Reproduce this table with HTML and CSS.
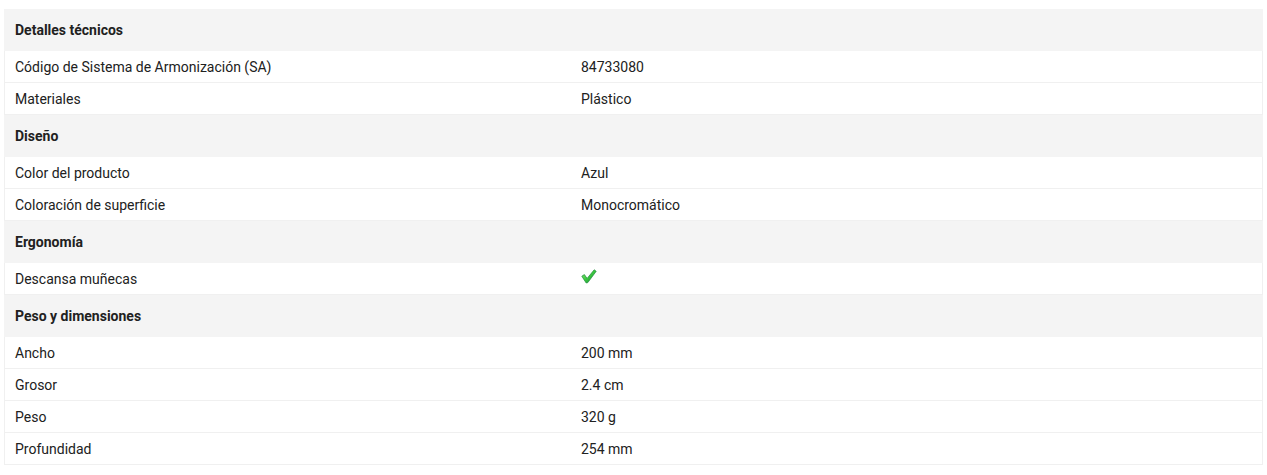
FILE: index.html
```html
<!DOCTYPE html>
<html lang="es">
<head>
<meta charset="utf-8">
<link rel="stylesheet" href="styles.css">
</head>
<body>
<div class="specs">
  <div class="group">Detalles técnicos</div>
  <div class="row"><div class="label">Código de Sistema de Armonización (SA)</div><div class="value">84733080</div></div>
  <div class="row"><div class="label">Materiales</div><div class="value">Plástico</div></div>
  <div class="group">Diseño</div>
  <div class="row"><div class="label">Color del producto</div><div class="value">Azul</div></div>
  <div class="row"><div class="label">Coloración de superficie</div><div class="value">Monocromático</div></div>
  <div class="group">Ergonomía</div>
  <div class="row"><div class="label">Descansa muñecas</div><div class="value"><svg class="check" width="16" height="15" viewBox="0 0 16 15"><defs><linearGradient id="g" x1="0" y1="0" x2="1" y2="1"><stop offset="0" stop-color="#8ff07a"/><stop offset="0.5" stop-color="#3cc83e"/><stop offset="1" stop-color="#0f7f3a"/></linearGradient></defs><path d="M0.8 7.2 L3.4 5.6 L6.1 9.4 L13.2 0.8 L15.2 2.3 L6.8 13.6 L5.2 14 Z" fill="url(#g)" stroke="#1a8a3a" stroke-width="0.7" stroke-linejoin="round"/></svg></div></div>
  <div class="group">Peso y dimensiones</div>
  <div class="row"><div class="label">Ancho</div><div class="value">200 mm</div></div>
  <div class="row"><div class="label">Grosor</div><div class="value">2.4 cm</div></div>
  <div class="row"><div class="label">Peso</div><div class="value">320 g</div></div>
  <div class="row"><div class="label">Profundidad</div><div class="value">254 mm</div></div>
</div>
</body>
</html>
```
FILE: styles.css
```css
html, body {
  margin: 0;
  padding: 0;
  background: #fff;
}
body {
  padding: 9px 4px 0 4px;
  font-family: Roboto, "Liberation Sans", Arial, sans-serif;
  font-size: 14px;
  color: #212121;
}
.specs {
  width: 1259px;
}
.group {
  height: 42px;
  line-height: 43px;
  background: #f4f4f4;
  padding: 0 11px;
  font-weight: 700;
}
.row {
  display: flex;
  height: 31px;
  align-items: center;
  border: 1px solid #f0f0f0;
  border-top: none;
}
.label {
  width: 566px;
  padding-left: 10px;
  box-sizing: border-box;
}
.value {
  flex: 1;
  padding-left: 10px;
  display: flex;
  align-items: center;
}
.check {
  display: block;
  margin-top: -5px;
}
```
